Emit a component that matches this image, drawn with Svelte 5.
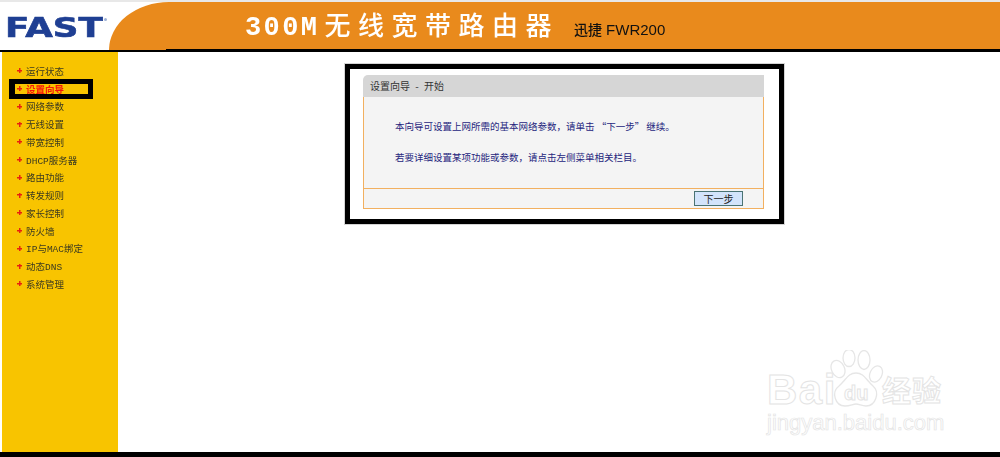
<script lang="ts">
	const menu = [
		'运行状态',
		'设置向导',
		'网络参数',
		'无线设置',
		'带宽控制',
		'DHCP服务器',
		'路由功能',
		'转发规则',
		'家长控制',
		'防火墙',
		'IP与MAC绑定',
		'动态DNS',
		'系统管理'
	];
	const activeItem = '设置向导';
</script>

<div class="page">
	<header class="header">
		<div class="logo">
			<span class="logo-text">FAST</span>
			<span class="logo-mark"></span>
		</div>
		<div class="banner">
			<h1 class="title"><span class="model">300M</span>无线宽带路由器</h1>
			<span class="subtitle"><b>迅捷</b> FWR200</span>
		</div>
	</header>

	<div class="body">
		<nav class="sidebar">
			<ul>
				{#each menu as item}
					<li class:active={item === activeItem}>
						<span class="bullet"></span>
						<span>{item}</span>
						{#if item === activeItem}
							<span class="mark"></span>
						{/if}
					</li>
				{/each}
			</ul>
		</nav>

		<main class="main">
			<section class="frame">
				<div class="panel">
					<div class="panel-title">设置向导 - 开始</div>
					<div class="panel-body">
						<p>本向导可设置上网所需的基本网络参数，请单击 “下一步” 继续。</p>
						<p>若要详细设置某项功能或参数，请点击左侧菜单相关栏目。</p>
					</div>
					<div class="panel-foot">
						<button type="button">下一步</button>
					</div>
				</div>
			</section>

			<div class="watermark" aria-hidden="true">
				<div class="brand">
					<span class="bai">Bai</span>
					<svg class="paw" width="56" height="58" viewBox="0 0 56 58" fill="#fff" stroke="#e6e6e6" stroke-width="1.3">
						<ellipse cx="8" cy="19" rx="6.5" ry="9" transform="rotate(-25 8 19)" />
						<ellipse cx="19" cy="8" rx="6" ry="8.5" />
						<ellipse cx="34" cy="10" rx="6" ry="9.5" />
						<ellipse cx="46" cy="24" rx="6" ry="8.5" transform="rotate(25 46 24)" />
						<path d="M26 23 C34 23 36 30 43 36 C50 42 46 56 36 56 C32 56 29 54 26 54 C23 54 20 56 15 56 C5 56 1 42 9 36 C16 30 18 23 26 23 Z" />
					</svg>
					<span class="du">du</span>
					<span class="cn">经验</span>
				</div>
				<div class="url">jingyan.baidu.com</div>
			</div>
		</main>
	</div>
</div>

<style>
	:global(body) {
		margin: 0;
		background: #fff;
	}

	.page {
		display: flex;
		flex-direction: column;
		height: 457px;
		overflow: hidden;
		box-sizing: border-box;
		border-top: 2px solid #e8e8e8;
		border-bottom: 5px solid #000;
		font-family: "Noto Sans CJK SC", "Liberation Sans", sans-serif;
		filter: blur(0.3px);
	}

	.header {
		display: flex;
		height: 48px;
		flex: none;
		border-bottom: 2px solid #000;
		padding-left: 2px;
	}

	.logo {
		position: relative;
		width: 107px;
		flex: none;
		overflow: hidden;
	}

	.logo-text {
		display: block;
		margin: 11px 0 0 3px;
		font: bold 26px/30px "DejaVu Sans", sans-serif;
		color: #1f3f93;
		-webkit-text-stroke: 0.6px #1f3f93;
		transform: scaleX(1.37);
		transform-origin: left center;
	}

	.logo-mark {
		position: absolute;
		left: 102px;
		top: 16px;
		width: 3px;
		height: 3px;
		border-radius: 50%;
		background: #9fb1d4;
	}

	.banner {
		position: relative;
		flex: 1;
		display: flex;
		align-items: center;
		padding: 0 0 0 136px;
		background: #e98a1c;
		border-top-left-radius: 60px 48px;
	}

	.banner::after {
		content: '';
		position: absolute;
		left: 57px;
		right: 0;
		bottom: 0;
		height: 1px;
		background: #000;
	}

	.title {
		margin: 0;
		font-size: 26px;
		line-height: 30px;
		font-weight: 500;
		letter-spacing: 7.5px;
		color: #fff;
		white-space: nowrap;
	}

	.model {
		margin-right: 5px;
		font-family: "Liberation Mono", monospace;
		font-size: 27px;
		font-weight: 700;
		letter-spacing: 2.4px;
	}

	.subtitle {
		margin-left: 15px;
		padding-top: 5px;
		font-family: "Liberation Sans", sans-serif;
		font-size: 15px;
		color: #111;
	}

	.subtitle b {
		font-family: "Noto Sans CJK SC", sans-serif;
		font-size: 14px;
		font-weight: 500;
	}

	.body {
		display: flex;
		flex: 1;
		min-height: 0;
		padding-left: 2px;
	}

	.sidebar {
		width: 116px;
		flex: none;
		background: #f8c400;
		padding-top: 10px;
		box-sizing: border-box;
	}

	.sidebar ul {
		margin: 0;
		padding: 0;
		list-style: none;
	}

	.sidebar li {
		position: relative;
		display: flex;
		align-items: center;
		height: 17.75px;
		padding-left: 15px;
		font-family: "Liberation Mono", "Noto Sans CJK SC", monospace;
		font-size: 9.5px;
		color: #3b3a20;
	}

	.sidebar li.active {
		color: #f5160c;
		font-weight: 700;
	}

	.bullet {
		width: 5px;
		height: 5px;
		margin-right: 4px;
		flex: none;
		background:
			linear-gradient(#e8200f, #e8200f) center / 5px 1.5px no-repeat,
			linear-gradient(#e8200f, #e8200f) center / 1.5px 5px no-repeat;
	}

	.mark {
		position: absolute;
		left: 7px;
		top: -1px;
		width: 73px;
		height: 10px;
		border: 5px solid #000;
		border-left-width: 6px;
	}

	.main {
		position: relative;
		flex: 1;
		padding: 12px 0 0 227px;
		background: #fff;
	}

	.frame {
		width: 439px;
		box-sizing: border-box;
		padding: 6px 15px 10px 13px;
		border: 5px solid #000;
		box-shadow: 0 0 0 1px #d4d4d4;
		background: #fff;
	}

	.panel-title {
		height: 22px;
		padding-left: 7px;
		font-size: 10px;
		line-height: 21px;
		word-spacing: 3px;
		color: #333;
		background: #d6d6d6;
		border-top-left-radius: 5px;
	}

	.panel-body {
		height: 92px;
		box-sizing: border-box;
		padding: 23px 0 0 31px;
		background: #f4f4f4;
		border: 1px solid #f2b060;
		border-top: none;
	}

	.panel-body p {
		margin: 0 0 18.5px;
		font-size: 9.5px;
		line-height: 12px;
		color: #25257d;
	}

	.panel-foot {
		display: flex;
		justify-content: flex-end;
		align-items: center;
		height: 19px;
		padding-right: 20px;
		background: #f4f4f4;
		border: 1px solid #f2b060;
		border-top: none;
	}

	button {
		width: 49px;
		height: 15px;
		padding: 0;
		font-family: inherit;
		font-size: 10px;
		line-height: 13px;
		color: #222;
		background: #d3e4fb;
		border: 1px solid #4a7373;
		border-right-width: 1.5px;
		border-bottom-width: 1.5px;
	}

	.watermark {
		position: absolute;
		left: 646px;
		top: 293px;
		width: 190px;
		color: #fff;
		-webkit-text-stroke: 1px #e4e4e4;
	}

	.brand {
		position: relative;
		height: 66px;
	}

	.bai {
		position: absolute;
		left: 3px;
		top: 23px;
		font: bold 42px/44px "Liberation Sans", sans-serif;
		letter-spacing: 1.5px;
	}

	.paw {
		position: absolute;
		left: 66px;
		top: 5px;
	}

	.du {
		position: absolute;
		left: 80px;
		top: 37px;
		font: bold 20px/22px "Liberation Sans", sans-serif;
	}

	.cn {
		position: absolute;
		left: 118px;
		top: 26px;
		font-size: 29px;
		line-height: 36px;
		letter-spacing: 1px;
		font-weight: 700;
		white-space: nowrap;
	}

	.url {
		margin-left: 3px;
		font: 22px/24px "Liberation Sans", sans-serif;
		-webkit-text-stroke-width: 0.7px;
		white-space: nowrap;
	}
</style>
